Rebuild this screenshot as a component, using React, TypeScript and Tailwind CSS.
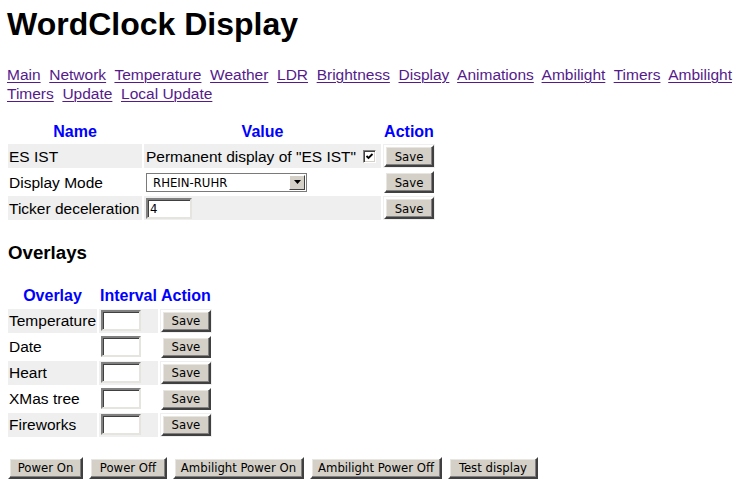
const links = [
  'Main', 'Network', 'Temperature', 'Weather', 'LDR', 'Brightness', 'Display',
  'Animations', 'Ambilight', 'Timers', 'Ambilight Timers', 'Update', 'Local Update',
];

const overlays = ['Temperature', 'Date', 'Heart', 'XMas tree', 'Fireworks'];

const btnFont = { fontFamily: '"DejaVu Sans Condensed", "Liberation Sans", sans-serif' };

function Btn({ label, className = '' }: { label: string; className?: string }) {
  return (
    <button
      style={btnFont}
      className={`block h-[22px] bg-[#d4d0c8] text-black text-[13px] leading-none border-2 border-t-white border-l-white border-r-[#404040] border-b-[#404040] shadow-[inset_-1px_-1px_0_#808080,inset_1px_1px_0_#e8e6e1] ${className}`}
    >
      {label}
    </button>
  );
}

function TextBox({ value = '', className = '' }: { value?: string; className?: string }) {
  return (
    <div
      style={btnFont}
      className={`bg-white text-[13px] leading-none flex items-center pl-[2px] border-2 border-t-[#808080] border-l-[#808080] border-r-[#e6e4df] border-b-[#e6e4df] shadow-[inset_1px_1px_0_#404040] ${className}`}
    >
      {value}
    </div>
  );
}

function Check() {
  return (
    <span className="inline-flex w-[13px] h-[13px] bg-white border border-t-[#808080] border-l-[#808080] border-r-white border-b-white shadow-[inset_1px_1px_0_#404040,inset_-1px_-1px_0_#d4d0c8] items-center justify-center">
      <svg width="9" height="9" viewBox="0 0 9 9">
        <path d="M1.5 4 L3.5 6 L7.5 2" stroke="#000" strokeWidth="1.8" fill="none" />
      </svg>
    </span>
  );
}

export default function App() {
  return (
    <div className="bg-white min-h-[497px] px-2 text-black text-[15.5px]" style={{ fontFamily: '"Liberation Sans", Arial, sans-serif' }}>
      <h1 className="text-[32px] font-bold leading-[37px] pt-[6px] -ml-px">WordClock Display</h1>

      <div className="mt-[23px] leading-[18.5px] -ml-px">
        {links.map((l, i) => (
          <span key={l}>
            <a href="#" className="text-[#551a8b] underline decoration-1 underline-offset-2">{l}</a>
            {i < links.length - 1 ? '\u00a0 ' : ''}
          </span>
        ))}
      </div>

      <table className="mt-[17px] -ml-[2px] border-separate border-spacing-[2px]">
        <thead>
          <tr className="text-[#0000ff] font-bold text-[16px] leading-[18.4px]">
            <th className="p-px w-[134px]">Name</th>
            <th className="p-px w-[237px]">Value</th>
            <th className="p-px w-[52px]">Action</th>
          </tr>
        </thead>
        <tbody>
          <tr className="h-[24px]">
            <td className="bg-[#efefef] px-px whitespace-nowrap">ES IST</td>
            <td className="bg-[#efefef] px-[2px]">
              <div className="flex items-center justify-between pr-[3px]">
                <span className="whitespace-nowrap">Permanent display of "ES IST"</span>
                <Check />
              </div>
            </td>
            <td className="bg-[#efefef] p-px"><Btn label="Save" className="w-[50px]" /></td>
          </tr>
          <tr className="h-[24px]">
            <td className="px-px whitespace-nowrap">Display Mode</td>
            <td className="px-[2px]">
              <div
                style={btnFont}
                className="w-[161px] h-[19px] border border-[#7a7a7a] flex items-center bg-white text-[13px]"
              >
                <span className="flex-1 pl-[6px] leading-none">RHEIN-RUHR</span>
                <span className="w-[16px] h-[15px] mr-px bg-[#d4d0c8] border border-t-white border-l-white border-r-[#404040] border-b-[#404040] flex items-center justify-center">
                  <svg width="7" height="4" viewBox="0 0 7 4"><path d="M0 0 H7 L3.5 4 Z" fill="#000" /></svg>
                </span>
              </div>
            </td>
            <td className="p-px"><Btn label="Save" className="w-[50px]" /></td>
          </tr>
          <tr className="h-[24px]">
            <td className="bg-[#efefef] px-px whitespace-nowrap">Ticker deceleration</td>
            <td className="bg-[#efefef] px-[2px]"><TextBox value="4" className="w-[46px] h-[21px]" /></td>
            <td className="bg-[#efefef] p-px"><Btn label="Save" className="w-[50px]" /></td>
          </tr>
        </tbody>
      </table>

      <h2 className="text-[18.7px] font-bold leading-[22px] mt-[20px]">Overlays</h2>

      <table className="mt-[20px] -ml-[2px] border-separate border-spacing-[2px]">
        <thead>
          <tr className="text-[#0000ff] font-bold text-[16px] leading-[18.4px]">
            <th className="p-px w-[89px]">Overlay</th>
            <th className="p-px w-[58px]">Interval</th>
            <th className="p-px w-[52px]">Action</th>
          </tr>
        </thead>
        <tbody>
          {overlays.map((o, i) => {
            const bg = i % 2 === 0 ? 'bg-[#efefef]' : '';
            return (
              <tr key={o} className="h-[24px]">
                <td className={`${bg} px-px whitespace-nowrap`}>{o}</td>
                <td className={`${bg} px-px`}><TextBox className="w-[40px] h-[21px] ml-px" /></td>
                <td className={`${bg} p-px`}><Btn label="Save" className="w-[50px]" /></td>
              </tr>
            );
          })}
        </tbody>
      </table>

      <div className="flex gap-[6px] mt-[18px]">
        <Btn label="Power On" className="w-[75px]" />
        <Btn label="Power Off" className="w-[78px]" />
        <Btn label="Ambilight Power On" className="w-[131px]" />
        <Btn label="Ambilight Power Off" className="w-[132px]" />
        <Btn label="Test display" className="w-[90px]" />
      </div>
    </div>
  );
}
